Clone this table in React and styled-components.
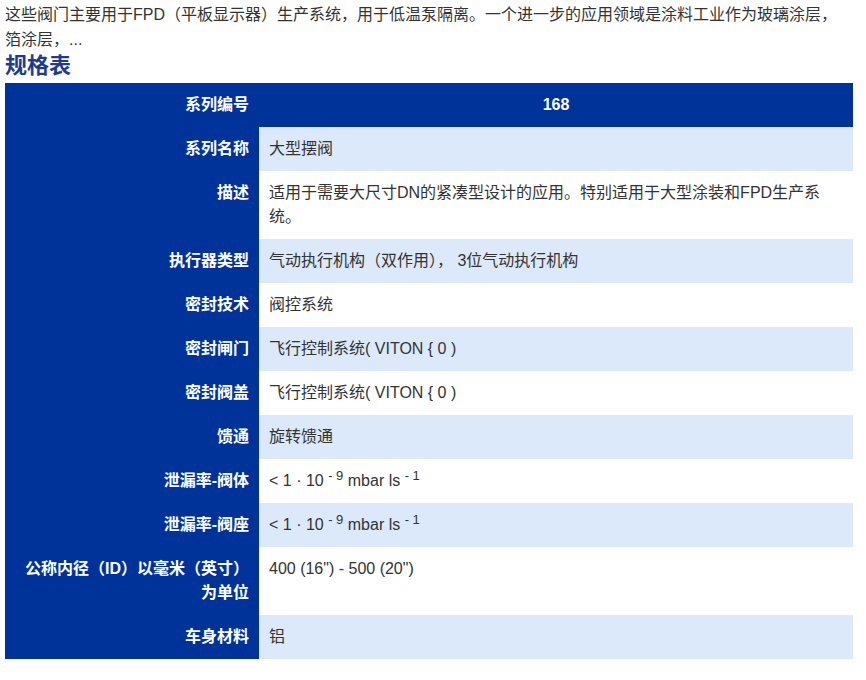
import React from "react";
import styled, { createGlobalStyle } from "styled-components";

const Global = createGlobalStyle`
  html, body { margin: 0; padding: 0; background: #fff; }
  body {
    font-family: "Liberation Sans", "Noto Sans CJK SC", sans-serif;
    font-size: 16px;
    color: #333;
  }
`;

const Page = styled.div`
  padding: 0 5px;
`;

const Intro = styled.p`
  margin: 0;
  padding-top: 2px;
  line-height: 25px;
  font-size: 16px;
  color: #333;
  max-width: 842px;
`;

const Heading = styled.h2`
  margin: 0 0 3px;
  font-size: 22px;
  line-height: 28px;
  font-weight: bold;
  color: #1d3c8f;
`;

const Table = styled.table`
  width: 848px;
  border-collapse: collapse;
  table-layout: fixed;
`;

const Row = styled.tr`
  background: ${(p) => (p.$alt ? "#dce9fa" : "#ffffff")};
`;

const Label = styled.th`
  width: 234px;
  background: #003399;
  color: #fff;
  font-weight: bold;
  text-align: right;
  vertical-align: top;
  padding: 10px 10px;
  line-height: 24px;
  font-size: 16px;
`;

const Value = styled.td`
  padding: 10px 10px;
  line-height: 24px;
  font-size: 16px;
  vertical-align: top;
  color: ${(p) => (p.$head ? "#fff" : "#333")};
  background: ${(p) => (p.$head ? "#003399" : "transparent")};
  font-weight: ${(p) => (p.$head ? "bold" : "normal")};
  text-align: ${(p) => (p.$head ? "center" : "left")};
`;

const Sup = styled.sup`
  font-size: 13px;
  line-height: 0;
  vertical-align: 6px;
`;

const Leak = () => (
  <>
    &lt; 1 · 10 <Sup>- 9</Sup> mbar ls <Sup>- 1</Sup>
  </>
);

const rows = [
  ["系列名称", "大型摆阀"],
  ["描述", "适用于需要大尺寸DN的紧凑型设计的应用。特别适用于大型涂装和FPD生产系统。"],
  ["执行器类型", "气动执行机构（双作用），  3位气动执行机构"],
  ["密封技术", "阀控系统"],
  ["密封闸门", "飞行控制系统( VITON { 0 )"],
  ["密封阀盖", "飞行控制系统( VITON { 0 )"],
  ["馈通", "旋转馈通"],
  ["泄漏率-阀体", <Leak />],
  ["泄漏率-阀座", <Leak />],
  ["公称内径（ID）以毫米（英寸）为单位", "400 (16\") - 500 (20\")"],
  ["车身材料", "铝"],
];

export default function App() {
  return (
    <Page>
      <Global />
      <Intro>
        这些阀门主要用于FPD（平板显示器）生产系统，用于低温泵隔离。一个进一步的应用领域是涂料工业作为玻璃涂层，箔涂层，...
      </Intro>
      <Heading>规格表</Heading>
      <Table>
        <tbody>
          <Row>
            <Label>系列编号</Label>
            <Value $head>168</Value>
          </Row>
          {rows.map(([k, v], i) => (
            <Row key={k} $alt={i % 2 === 0}>
              <Label>{k}</Label>
              <Value>{v}</Value>
            </Row>
          ))}
        </tbody>
      </Table>
    </Page>
  );
}
